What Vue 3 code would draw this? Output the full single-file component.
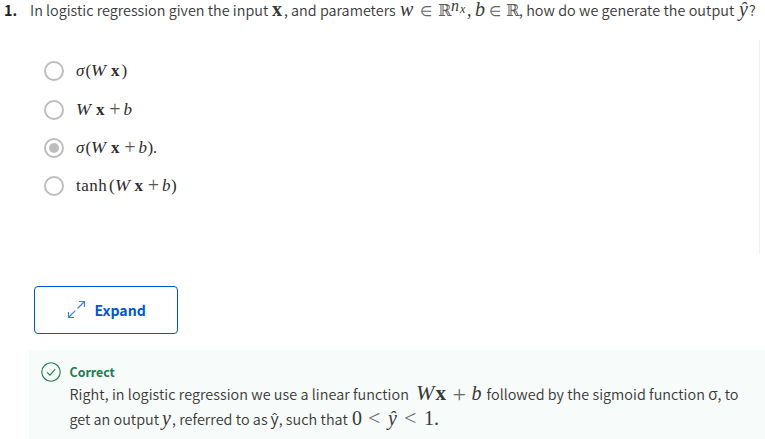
<script setup>
const options = [
  { id: 'a', pre: 'σ(', post: ')', checked: false },
  { id: 'b', pre: '', post: '+b', checked: false },
  { id: 'c', pre: 'σ(', post: '+b).', checked: true },
  { id: 'd', pre: 'tanh(', post: '+b)', checked: false },
]
</script>

<template>
  <main class="quiz">
    <div class="question">
      <span class="num">1.</span>
      <span class="q1">In logistic regression given the input</span>
      <b class="m qx">x</b>
      <span class="q2">, and parameters</span>
      <i class="m qw">w</i>
      <span class="sym qin">∈</span>
      <span class="bb qr">ℝ</span>
      <i class="m qn">n</i>
      <i class="m qsub">x</i>
      <span class="m qc">,</span>
      <i class="m qb">b</i>
      <span class="sym qin2">∈</span>
      <span class="bb qr2">ℝ</span>
      <span class="q3">, how do we generate the output</span>
      <i class="m qy">ŷ</i>
      <span class="q4">?</span>
    </div>

    <div class="answers">
      <div v-for="o in options" :key="o.id" class="option">
        <span class="radio" :class="{ checked: o.checked }"></span>
        <span class="formula m">
          <template v-if="o.id === 'd'"><span class="tanh">tanh</span><span class="paren">(</span></template>
          <template v-else-if="o.pre"><i class="sigma">σ</i><span class="paren">(</span></template>
          <i class="big-w">W</i><b class="vec">x</b>
          <template v-if="o.id !== 'a'"><span class="plus">+</span><i class="bias">b</i></template>
          <span v-if="o.id !== 'b'" class="paren">)</span>
          <span v-if="o.id === 'c'">.</span>
        </span>
      </div>
    </div>

    <button class="expand" type="button">
      <svg width="20" height="20" viewBox="0 0 20 20" fill="none" stroke="#3f7fdc" stroke-width="1.2">
        <path d="M12 2.5h5.5V8M17.5 2.5l-7 7M8.3 11.7L1.5 18.5M1.5 13v5.5H7" />
      </svg>
      <span>Expand</span>
    </button>

    <section class="feedback">
      <svg class="tick" width="20" height="20" viewBox="0 0 20 20" fill="none" stroke="#1d7c50">
        <circle cx="10" cy="10" r="9.2" stroke-width="1.1" />
        <path d="M6 10.3l3 2.8 5.2-6" stroke-width="1.1" />
      </svg>
      <div class="message">
        <div class="title">Correct</div>
        <div class="line">
          <span class="f1">Right, in logistic regression we use a linear function</span>
          <i class="m fw">W</i>
          <b class="m fx">x</b>
          <span class="m op fplus">+</span>
          <i class="m fb">b</i>
          <span class="f2">followed by the sigmoid function <span class="sig">σ</span>, to</span>
        </div>
        <div class="line">
          <span class="g1">get an output</span>
          <i class="m gy">y</i>
          <span class="g2">, referred to as <span class="yhat">ŷ</span>, such that</span>
          <span class="m g0">0</span>
          <span class="m op glt">&lt;</span>
          <i class="m gyh">ŷ</i>
          <span class="m op glt2">&lt;</span>
          <span class="m gone">1.</span>
        </div>
      </div>
    </section>
  </main>
</template>

<style>
body { background: #fff; overflow: hidden; }
</style>

<style scoped>
.quiz {
  width: 765px; height: 439px; overflow: hidden; box-sizing: border-box;
  display: flex; flex-direction: column;
  font-family: "Noto Sans CJK SC", "Open Sans", sans-serif;
  font-size: 14.4px; font-weight: 350; color: #383838;
}
.m { font-family: "Liberation Serif", serif; }
.sym { font-family: "DejaVu Sans", sans-serif; color: #666; }
.bb { font-family: "DejaVu Serif", "DejaVu Sans", serif; color: #5c5c5c; }
.question, .line { display: flex; align-items: baseline; white-space: pre; flex: none; }
.question > *, .line > * { flex: none; }
.question > * { line-height: 18px; }
.question { height: 40px; padding-left: 4px; box-sizing: border-box; }
.num { width: 26px; font-weight: 700; color: #222; }
.q1 { width: 242px; }
.qx { width: 12px; font-size: 20px; }
.q2 { width: 116px; }
.qw { width: 20px; font-size: 20px; }
.sym { font-size: 14px; }
.qin { width: 18px; }
.bb { font-size: 16px; }
.qr { width: 13px; }
.qn { width: 9px; font-size: 16px; transform: translateY(-5px); }
.qsub { width: 7px; font-size: 12px; transform: translateY(-3px); }
.qc { width: 8px; font-size: 18px; }
.qb { width: 14px; font-size: 20px; }
.qin2 { width: 17px; }
.qr2 { width: 13px; }
.q3 { width: 220px; letter-spacing: .04px; }
.qy { width: 10px; font-size: 20px; }

.answers {
  flex: none; width: 716px; height: 214px; box-sizing: border-box;
  margin-left: 44px; padding-top: 12px; border-right: 1px solid #f1f1f1;
}
.option { display: flex; align-items: center; height: 38.4px; }
.radio {
  width: 20px; height: 20px; box-sizing: border-box; flex: none;
  border: 2px solid #bdbdbd; border-radius: 50%;
  display: flex; align-items: center; justify-content: center;
}
.checked::after { content: ""; width: 10px; height: 10px; border-radius: 50%; background: #bdbdbd; }
.formula { display: flex; align-items: baseline; margin-left: 12px; font-size: 16px; line-height: 20px; color: #2c2c2c; }
.sigma { width: 9.5px; font-size: 17px; }
.paren { width: 5.5px; font-size: 17px; }
.tanh { width: 33px; font-size: 17px; letter-spacing: .5px; }
.big-w { width: 20px; transform: scaleX(1.12); transform-origin: left; }
.vec { width: 10.5px; font-size: 17px; }
.plus { width: 17px; font-size: 20px; text-align: center; line-height: 16px; color: #555; transform: translateY(1px); }
.bias { width: 9px; font-size: 17px; }

.expand {
  flex: none; width: 144px; height: 48px; box-sizing: border-box;
  margin: 32px 0 0 34px; padding: 0 0 0 32px;
  display: flex; align-items: center; gap: 7.5px;
  border: 1px solid #0056d2; border-radius: 4px; background: #fff; color: #0056d2;
  font: 700 14.1px/20px "Noto Sans CJK SC", "Open Sans", sans-serif;
}
.expand svg { margin-top: -2px; }
.feedback {
  flex: none; height: 90px; margin: 16px 0 0 29px; padding: 12px 0 0 12px;
  box-sizing: border-box; display: flex; gap: 8.5px; background: #f7fbf9;
}
.tick { flex: none; }
.title { color: #1d7c50; font-weight: 700; font-size: 12.4px; line-height: 20px; height: 19px; }
.line { height: 25px; line-height: 25px; }
.f1 { width: 346px; letter-spacing: .04px; }
.fw { width: 20px; font-size: 20px; transform: scaleX(1.1); transform-origin: left; }
.fx { width: 17px; font-size: 21px; }
.op { font-size: 24px; color: #666; line-height: 20px; }
.fplus { width: 19px; transform: translateY(2px); }
.fb { width: 15px; font-size: 20px; }
.f2 { letter-spacing: .03px; }
.sig { font-size: 15.5px; }
.yhat { font-family: "Open Sans", sans-serif; font-size: 15.5px; line-height: 20px; font-weight: 400; }
.g1 { width: 92.5px; }
.gy { width: 10px; font-size: 20px; }
.g2 { width: 180px; letter-spacing: .04px; }
.g0 { width: 16px; font-size: 20px; }
.glt { width: 20px; font-size: 22px; }
.gyh { width: 16px; font-size: 20px; }
.glt2 { width: 20px; font-size: 22px; }
.gone { font-size: 20px; }
</style>
